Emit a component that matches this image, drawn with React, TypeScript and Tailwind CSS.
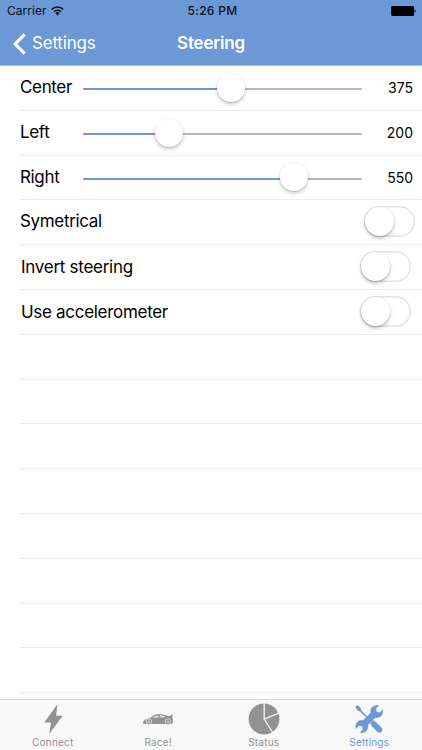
import clsx from "clsx";

const SLIDERS = [
  { label: "Center", value: 375, thumb: 147.5 },
  { label: "Left", value: 200, thumb: 85.5 },
  { label: "Right", value: 550, thumb: 210.5 },
];

const SWITCHES = [
  { label: "Symetrical", className: "pl-5 pr-[7px] pb-[2px]", tracking: "tracking-[-0.33px]" },
  { label: "Invert steering", className: "pl-[21px] pr-[11px] pb-[2px]", tracking: "pt-[2px] tracking-[-0.27px]" },
  { label: "Use accelerometer", className: "pl-[21px] pr-[11px] pb-[1px]", tracking: "pt-[2px] tracking-[-0.3px]" },
];

const EMPTY_ROWS = [0, 1, 2, 3, 4, 5, 6, 7];

function WifiIcon() {
  return (
    <svg className="ml-[4px] h-[10px] w-[13px]" viewBox="0 0 13 10" fill="none" stroke="#0b1018" strokeWidth="1.5">
      <path d="M0.8 3.4A8.2 8.2 0 0 1 12.2 3.4" />
      <path d="M2.9 5.7A5.1 5.1 0 0 1 10.1 5.7" />
      <path d="M6.5 9.4L4.3 7.1A3.1 3.1 0 0 1 8.7 7.1Z" fill="#0b1018" stroke="none" />
    </svg>
  );
}

function BatteryIcon() {
  return (
    <svg className="h-[10px] w-[25px]" viewBox="0 0 25 10">
      <rect x="0.2" y="0" width="22.8" height="10" rx="1.2" fill="#000" />
      <path d="M23.5 3.5C25.1 3.9 25.1 6.1 23.5 6.5Z" fill="#000" />
    </svg>
  );
}

function BoltIcon() {
  return (
    <svg className="h-[32px] w-[32px]" viewBox="0 0 32 32" fill="#929292">
      <path d="M20.3 1.2L7.3 19.5H14L12.3 31L25.6 12.8H19.2Z" />
    </svg>
  );
}

function CarIcon() {
  return (
    <svg className="h-[32px] w-[32px]" viewBox="0 0 32 32">
      <path
        d="M1 19.4C1.2 17.3 3.4 16 7.6 15.2C11 12.4 13.3 11.2 17 11C20.8 11 23.5 12 26.2 13L28.8 12.7L29.6 11.6L31 11.8L30 14.6C31.2 16 31.4 18.3 30.6 20.2L28.6 21H3L1 20.5Z"
        fill="#929292"
      />
      <path d="M10.4 14.9C12.3 13.2 14.2 12.3 16.2 12.2L16.5 14.6Z" fill="#dcdcdc" />
      <path d="M17.6 12.2C20 12.1 21.6 12.6 23 13.3L22 14.4L17.9 14.6Z" fill="#dcdcdc" />
      <circle cx="6.9" cy="18.6" r="2.8" fill="#929292" stroke="#e8e8e8" strokeWidth="0.8" />
      <circle cx="25.9" cy="18.6" r="2.8" fill="#929292" stroke="#e8e8e8" strokeWidth="0.8" />
      <circle cx="6.9" cy="18.6" r="1.2" fill="#c8c8c8" />
      <circle cx="25.9" cy="18.6" r="1.2" fill="#c8c8c8" />
    </svg>
  );
}

function PieIcon() {
  return (
    <svg className="h-[32px] w-[32px]" viewBox="0 0 32 32">
      <circle cx="16" cy="16" r="15.4" fill="#929292" />
      <path d="M16.2 0V16L31.5 9.8M16.2 16L25 30" fill="none" stroke="#f8f8f8" strokeWidth="1.3" />
    </svg>
  );
}

function ToolsIcon() {
  return (
    <svg className="h-[32px] w-[32px]" viewBox="0 0 32 32">
      <path d="M5 5.2L20 20.2" stroke="#6c98d6" strokeWidth="1.5" />
      <path d="M2.2 4.1L4.1 2.3L7.2 4.3L8.3 7.5L7 8.6L4.2 7.3Z" fill="#6c98d6" />
      <path d="M21.4 21.6L26.4 26.6" stroke="#6c98d6" strokeWidth="5.8" strokeLinecap="round" />
      <path d="M17.8 21.2L21.2 17.8" stroke="#6c98d6" strokeWidth="2" />
      <path
        d="M26.4 2.3L23.2 5.6L23.8 8.7L26.9 9.3L29.9 6.3C30.5 9.5 29.6 12.2 27.5 13.7C25.9 14.9 24 15.3 22.3 14.9L15.1 22.1C15.6 23.9 15.2 25.8 14 27.4C12.2 29.7 9.5 30.4 6.6 29.8L9.7 26.6L9.1 23.5L6 22.9L2.7 26.1C1.8 23 2.5 20.2 4.7 18.5C6.3 17.2 8 16.8 9.9 17.2L17.4 9.7C17 8 17.3 6.2 18.6 4.6C20.4 2.3 23.4 1.5 26.4 2.3Z"
        fill="#6c98d6"
        stroke="#f8f8f8"
        strokeWidth="0.3"
      />
    </svg>
  );
}

const TABS = [
  { label: "Connect", icon: BoltIcon, active: false },
  { label: "Race!", icon: CarIcon, active: false },
  { label: "Status", icon: PieIcon, active: false },
  { label: "Settings", icon: ToolsIcon, active: true },
];

function Slider({ thumb }: { thumb: number }) {
  return (
    <div className="relative mt-[1px] h-7 w-[279px]">
      <div className="absolute inset-x-0 top-[14px] h-[2px] rounded-full bg-[#b7b7b7]" />
      <div className="absolute left-0 top-[14px] h-[2px] rounded-full bg-[#6c98d6]" style={{ width: thumb }} />
      <div
        className="absolute top-[-0.5px] size-7 rounded-full bg-white shadow-[0_2px_4px_rgba(0,0,0,0.22),0_1px_1px_rgba(0,0,0,0.12)]"
        style={{ left: thumb - 14 }}
      />
    </div>
  );
}

function Toggle() {
  return (
    <div className="relative h-[31px] w-[51px] rounded-full bg-white shadow-[inset_0_0_0_1.5px_#e3e3e3]">
      <div className="absolute left-[1px] top-[1px] size-[29px] rounded-full bg-white shadow-[0_2px_4px_rgba(0,0,0,0.24),0_1px_1px_rgba(0,0,0,0.14)]" />
    </div>
  );
}

export default function App() {
  return (
    <div className="flex h-[750px] w-[422px] flex-col overflow-hidden bg-white font-['Inter','Liberation_Sans',sans-serif] text-black">
      <header className="h-[66px] shrink-0 border-b border-[#a9bddc] bg-[#6c98d6]">
        <div className="grid h-[22px] grid-cols-3 items-center pl-[7px] pr-[6px] text-[12px] text-[#0b1018]">
          <div className="flex items-center">
            <span className="tracking-[0.03px]">Carrier</span>
            <WifiIcon />
          </div>
          <span className="pl-[2px] text-center font-medium tracking-[0.3px]">5:26 PM</span>
          <div className="flex justify-end">
            <BatteryIcon />
          </div>
        </div>
        <div className="grid h-[43px] grid-cols-3 items-center pl-[13px] pr-[13px] text-[17px] text-white">
          <div className="flex items-center gap-[6px]">
            <svg className="h-[22px] w-[13px]" viewBox="0 0 13 22" fill="none" stroke="white" strokeWidth="3.2">
              <path d="M11.6 1.3L2.2 11L11.6 20.7" />
            </svg>
            <span className="tracking-[-0.2px]">Settings</span>
          </div>
          <span className="text-center font-semibold tracking-[-0.2px]">Steering</span>
        </div>
      </header>

      <main className="flex-1 overflow-hidden">
        {SLIDERS.map((row) => (
          <div key={row.label} className="flex h-[44.8px] flex-col pl-[20px]">
            <div className="flex flex-1 items-center border-b border-[#ebebeb] pr-[9px]">
              <span className="w-[63px] text-[17px] tracking-[-0.35px]">{row.label}</span>
              <Slider thumb={row.thumb} />
              <span className="flex-1 text-right text-[14px] tracking-[0px]">{row.value}</span>
            </div>
          </div>
        ))}
        {SWITCHES.map((row) => (
          <div key={row.label} className="relative h-[44.8px]">
            <div className={clsx("flex h-full items-center justify-between", row.className)}>
              <span className={clsx("text-[17px]", row.tracking)}>{row.label}</span>
              <Toggle />
            </div>
            <div className="absolute bottom-0 left-5 right-0 h-px bg-[#ebebeb]" />
          </div>
        ))}
        {EMPTY_ROWS.map((row) => (
          <div key={row} className="ml-5 h-[44.8px] border-b border-[#ebebeb]" />
        ))}
      </main>

      <nav className="grid h-[51px] shrink-0 grid-cols-4 border-t border-[#d8d8d8] bg-[#f8f8f8]">
        {TABS.map(({ label, icon: Icon, active }) => (
          <div key={label} className={clsx("flex flex-col items-center pt-[3px]", active ? "text-[#6c98d6]" : "text-[#929292]")}>
            <Icon />
            <span className="text-[10px] leading-[14px] tracking-[0.2px]">{label}</span>
          </div>
        ))}
      </nav>
    </div>
  );
}
